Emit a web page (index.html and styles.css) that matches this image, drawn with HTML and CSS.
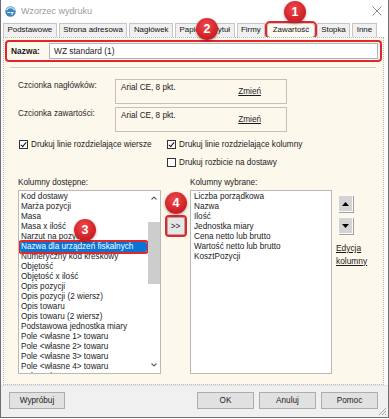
FILE: index.html
```html
<!DOCTYPE html>
<html lang="pl">
<head>
    <meta charset="UTF-8">
    <title>Wzorzec wydruku</title>
    <link rel="stylesheet" href="styles.css">
</head>
<body>
<div class="window">
    <div class="titlebar">
        <svg class="app-icon" width="11" height="11" viewBox="0 0 11 11">
            <circle cx="5.5" cy="5.5" r="5.2" fill="#3f86b8"/>
            <path d="M1.5 4.2 A4.5 4.5 0 0 1 9.6 4.2" stroke="#bfe3f5" stroke-width="1.4" fill="none"/>
            <rect x="2.4" y="6" width="2.4" height="1" fill="#fff"/>
            <rect x="5.6" y="6" width="3" height="1" fill="#fff"/>
            <rect x="6.6" y="6" width="1" height="3" fill="#fff"/>
        </svg>
        <span class="title">Wzorzec wydruku</span>
        <svg class="close" width="10" height="10" viewBox="0 0 10 10">
            <path d="M0.5 0.5 L9.5 9.5 M9.5 0.5 L0.5 9.5" stroke="#8c8c8c" stroke-width="1"/>
        </svg>
    </div>

    <div class="tabs">
        <span class="tab">Podstawowe</span>
        <span class="tab">Strona adresowa</span>
        <span class="tab">Nagłówek</span>
        <span class="tab">Papier</span>
        <span class="tab">Tytuł</span>
        <span class="tab">Firmy</span>
        <span class="tab active">Zawartość</span>
        <span class="tab">Stopka</span>
        <span class="tab">Inne</span>
    </div>

    <div class="panel">
        <div class="name-row">
            <span class="name-label">Nazwa:</span>
            <div class="name-input">WZ standard (1)</div>
        </div>

        <div class="sep"></div>

        <!-- czcionki -->
        <div class="fonts">
            <span class="font-label">Czcionka nagłówków:</span>
            <div class="font-box"><span>Arial CE, 8 pkt.</span><span class="link">Zmień</span></div>
            <span class="font-label">Czcionka zawartości:</span>
            <div class="font-box"><span>Arial CE, 8 pkt.</span><span class="link">Zmień</span></div>
        </div>

        <div class="checks">
            <label class="check"><span class="cb on"></span>Drukuj linie rozdzielające wiersze</label>
            <label class="check"><span class="cb on"></span>Drukuj linie rozdzielające kolumny</label>
            <span></span>
            <label class="check"><span class="cb"></span>Drukuj rozbicie na dostawy</label>
        </div>

        <!-- kolumny -->
        <div class="columns">
            <span class="col-label">Kolumny dostępne:</span>
            <span></span>
            <span class="col-label">Kolumny wybrane:</span>
            <span></span>

            <div class="list list-left">
                <div class="items">
                    <div class="item">Kod dostawy</div>
                    <div class="item">Marża pozycji</div>
                    <div class="item">Masa</div>
                    <div class="item">Masa x ilość</div>
                    <div class="item">Narzut na pozycję</div>
                    <div class="item selected">Nazwa dla urządzeń fiskalnych</div>
                    <div class="item">Numeryczny kod kreskowy</div>
                    <div class="item">Objętość</div>
                    <div class="item">Objętość x ilość</div>
                    <div class="item">Opis pozycji</div>
                    <div class="item">Opis pozycji (2 wiersz)</div>
                    <div class="item">Opis towaru</div>
                    <div class="item">Opis towaru (2 wiersz)</div>
                    <div class="item">Podstawowa jednostka miary</div>
                    <div class="item">Pole &lt;własne 1&gt; towaru</div>
                    <div class="item">Pole &lt;własne 2&gt; towaru</div>
                    <div class="item">Pole &lt;własne 3&gt; towaru</div>
                    <div class="item">Pole &lt;własne 4&gt; towaru</div>
                    <div class="item">Pole &lt;własne 5&gt; towaru</div>
                </div>
                <div class="scrollbar">
                    <svg class="arrow" width="12" height="14" viewBox="0 0 12 14">
                        <path d="M3.5 8.5 L6 6 L8.5 8.5" stroke="#606060" stroke-width="1.1" fill="none"/>
                    </svg>
                    <div class="thumb"></div>
                    <svg class="arrow bottom" width="12" height="14" viewBox="0 0 12 14">
                        <path d="M3.5 5.5 L6 8 L8.5 5.5" stroke="#606060" stroke-width="1.1" fill="none"/>
                    </svg>
                </div>
            </div>

            <div class="mid">
                <button type="button" class="move">&gt;&gt;</button>
            </div>

            <div class="list list-right">
                <div class="item">Liczba porządkowa</div>
                <div class="item">Nazwa</div>
                <div class="item">Ilość</div>
                <div class="item">Jednostka miary</div>
                <div class="item">Cena netto lub brutto</div>
                <div class="item">Wartość netto lub brutto</div>
                <div class="item">KosztPozycji</div>
            </div>

            <div class="side">
                <button type="button" class="arrow-btn">
                    <svg width="7" height="4" viewBox="0 0 7 4"><path d="M0 4 L3.5 0 L7 4 Z" fill="#000"/></svg>
                </button>
                <button type="button" class="arrow-btn">
                    <svg width="7" height="4" viewBox="0 0 7 4"><path d="M0 0 L3.5 4 L7 0 Z" fill="#000"/></svg>
                </button>
                <span class="link edit">Edycja<br>kolumny</span>
            </div>
        </div>
    </div>

    <div class="footer">
        <button type="button" class="btn">Wypróbuj</button>
        <div class="footer-right">
            <button type="button" class="btn">OK</button>
            <button type="button" class="btn">Anuluj</button>
            <button type="button" class="btn">Pomoc</button>
        </div>
        <svg class="grip" width="9" height="9" viewBox="0 0 9 9">
            <path d="M8 1 L1 8 M8 4 L4 8 M8 7 L7 8" stroke="#a5a5a5" stroke-width="1"/>
        </svg>
    </div>

    <!-- znaczniki -->
    <span class="badge b1">1</span>
    <span class="badge b2">2</span>
    <span class="badge b3">3</span>
    <span class="badge b4">4</span>
</div>
</body>
</html>
```

FILE: styles.css
```css
* {
    box-sizing: border-box;
}

body {
    margin: 0;
    background: #fff;
    font-family: "Liberation Sans", Arial, sans-serif;
    font-size: 8.2px;
    color: #1b1b1b;
}

.window {
    position: relative;
    width: 389px;
    height: 418px;
    border: 1px solid #6f6f6f;
    border-top: none;
    background: #fafafa;
    display: flex;
    flex-direction: column;
}

.titlebar {
    height: 22px;
    display: flex;
    align-items: center;
    padding: 0 6px 0 4px;
    background: #fff;
}
.title {
    margin-left: 5px;
    font-size: 9px;
    color: #9a9a9a;
}
.close {
    margin-left: auto;
}

.tabs {
    display: flex;
    gap: 2px;
    height: 14px;
    margin-top: 1px;
    padding-left: 2px;
    background: #fff;
}
.tab {
    padding: 0 3.5px;
    line-height: 12px;
    font-size: 7.9px;
    color: #111;
    background: #f0f0f0;
    border: 1px solid #c6c6c6;
    border-bottom: none;
    white-space: nowrap;
}
.tab.active {
    padding: 0 4.5px;
    background: #fbf9f2;
    outline: 2px solid #e3262c;
    outline-offset: 0;
    border-radius: 3px;
}

.panel {
    flex: none;
    margin: 0 4px 0 2px;
    border: 1px dotted #b8b8b8;
    background: #fdf8ec;
    padding-bottom: 10px;
}

.name-row {
    display: flex;
    align-items: center;
    height: 22px;
    margin: 2px 1px 0 1px;
    border: 2px solid #e3262c;
    border-radius: 4px;
    padding: 0 2px 0 4px;
}
.name-label {
    width: 38px;
    font-weight: bold;
    font-size: 8.4px;
}
.name-input {
    flex: 1;
    height: 16px;
    line-height: 14px;
    padding-left: 4px;
    background: #fff;
    border: 1px solid #b4b4b4;
    font-size: 8.4px;
}

.sep {
    height: 2px;
    margin: 5px 7px 0 6px;
    border-top: 1px solid #d0ccc2;
    border-bottom: 1px solid #fff;
}

.fonts {
    display: grid;
    grid-template-columns: 97px 172px;
    row-gap: 3px;
    margin-top: 10px;
    padding-left: 14px;
}
.font-label {
    padding-top: 2px;
    line-height: 10px;
    color: #2a2a2a;
}
.font-box {
    height: 25px;
    display: flex;
    justify-content: space-between;
    align-items: flex-start;
    padding: 3px 25px 0 5px;
    border: 1px solid #c4c1b8;
    line-height: 10px;
}
.font-box .link {
    margin-top: 4px;
}

.link {
    text-decoration: underline;
    color: #1b1b1b;
    cursor: pointer;
}

.checks {
    display: grid;
    grid-template-columns: 148px auto;
    row-gap: 6px;
    margin-top: 6px;
    padding-left: 15px;
}
.check {
    display: flex;
    align-items: center;
    gap: 3px;
    height: 12px;
    color: #1b1b1b;
}
.cb {
    width: 9px;
    height: 9px;
    border: 1px solid #333;
    background: #fff;
    position: relative;
}
.cb.on::after {
    content: "";
    position: absolute;
    left: 2px;
    top: 0;
    width: 2px;
    height: 5px;
    border: solid #111;
    border-width: 0 1.5px 1.5px 0;
    transform: rotate(40deg);
}

.columns {
    display: grid;
    grid-template-columns: 143px 29px 142px auto;
    grid-template-rows: 10px 184px;
    row-gap: 2px;
    margin-top: 10px;
    padding-left: 14px;
}
.col-label {
    line-height: 10px;
    color: #1b1b1b;
}

.list {
    background: #fff;
    border: 1px solid #b9b9b9;
    overflow: hidden;
}
.list-left {
    display: flex;
}
.items {
    flex: 1;
    overflow: hidden;
    padding: 1px 1px 0 1px;
}
.item {
    height: 10px;
    line-height: 10px;
    padding-left: 1px;
    white-space: nowrap;
}
.item.selected {
    background: #0a74d4;
    color: #fff;
    outline: 2px solid #e3262c;
    border-radius: 2px;
}
.list-right {
    padding: 1px 0 0 2px;
}

.scrollbar {
    width: 12px;
    display: flex;
    flex-direction: column;
    background: #fff;
}
.thumb {
    width: 12px;
    height: 62px;
    margin-top: 17px;
    background: #cdcdcd;
}
.arrow.bottom {
    margin-top: auto;
    margin-bottom: 1px;
}

.mid {
    display: flex;
    justify-content: center;
    padding-top: 27px;
}
.move {
    width: 18px;
    height: 18px;
    padding: 0;
    font-family: inherit;
    font-size: 8.2px;
    color: #222;
    background: #e6e6e6;
    border: 1px solid #a9a9a9;
    outline: 2px solid #e3262c;
    border-radius: 2px;
}

.side {
    display: flex;
    flex-direction: column;
    align-items: flex-start;
    padding: 5px 0 0 4px;
}
.arrow-btn {
    width: 15px;
    height: 17px;
    margin-left: 2px;
    padding: 0;
    display: flex;
    align-items: center;
    justify-content: center;
    background: #d4d4d4;
    border: 1px solid #fafafa;
    box-shadow: 1px 1px 0 #a0a0a0;
}
.arrow-btn + .arrow-btn {
    margin-top: 5px;
}
.edit {
    margin-top: 8px;
    line-height: 12.5px;
    font-size: 8.4px;
}

.footer {
    position: relative;
    flex: 1;
    display: flex;
    align-items: flex-start;
    padding: 6px 10px 0 8px;
    background: #f0f0f0;
    border-top: 1px solid #e2e2e2;
}
.footer-right {
    display: flex;
    gap: 5px;
    margin-left: auto;
}
.btn {
    width: 57px;
    height: 17px;
    padding: 0;
    font-family: inherit;
    font-size: 8.2px;
    color: #1b1b1b;
    background: #e1e1e1;
    border: 1px solid #adadad;
}
.footer > .btn {
    width: 56px;
}
.grip {
    position: absolute;
    right: 1px;
    bottom: 1px;
}

.badge {
    position: absolute;
    width: 22px;
    height: 22px;
    border-radius: 50%;
    display: flex;
    align-items: center;
    justify-content: center;
    font-family: "Liberation Sans", Arial, sans-serif;
    font-size: 12.5px;
    font-weight: bold;
    color: #fff;
    background: radial-gradient(circle at 45% 35%, #ef4a4f 0%, #d5252b 55%, #a8161b 100%);
    box-shadow: 0 1px 3px rgba(0,0,0,0.35);
}
.b1 { left: 283px; top: 1px; }
.b2 { left: 195px; top: 18px; }
.b3 { left: 73px; top: 219px; }
.b4 { left: 164px; top: 192px; }
```
